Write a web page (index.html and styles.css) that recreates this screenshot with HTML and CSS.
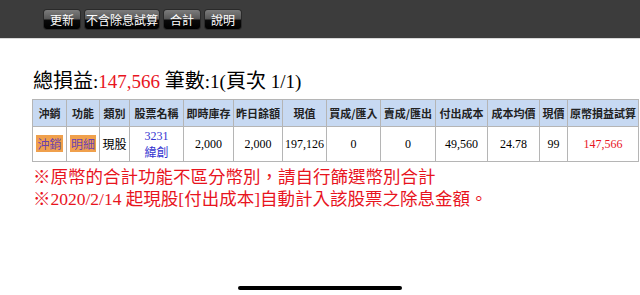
FILE: index.html
```html
<!DOCTYPE html>
<html lang="zh-Hant">
<head>
  <meta charset="UTF-8">
  <meta name="viewport" content="width=device-width, initial-scale=1.0">
  <title>庫存損益</title>
  <link rel="stylesheet" href="styles.css">
</head>
<body>

<div class="topbar">
  <button class="btn">更新</button>
  <button class="btn btn-wide">不含除息試算</button>
  <button class="btn">合計</button>
  <button class="btn">說明</button>
</div>

<div class="content">
  <div class="summary">
    <span class="big">總損益</span>:<span class="red">147,566</span> <span class="big">筆數</span>:1(<span class="big">頁次</span> 1/1)
  </div>

  <table class="grid">
    <colgroup>
      <col class="c1"><col class="c2"><col class="c3"><col class="c4"><col class="c5">
      <col class="c6"><col class="c7"><col class="c8"><col class="c9"><col class="c10">
      <col class="c11"><col class="c12"><col class="c13">
    </colgroup>
    <tr>
      <th>沖銷</th><th>功能</th><th>類別</th><th>股票名稱</th><th>即時庫存</th>
      <th>昨日餘額</th><th>現值</th><th>買成/匯入</th><th>賣成/匯出</th><th>付出成本</th>
      <th>成本均價</th><th>現價</th><th>原幣損益試算</th>
    </tr>
    <tr>
      <td><span class="tag">沖銷</span></td>
      <td><span class="tag">明細</span></td>
      <td class="cjk">現股</td>
      <td class="stock">3231<br><span class="cjk">緯創</span></td>
      <td>2,000</td>
      <td>2,000</td>
      <td>197,126</td>
      <td>0</td>
      <td>0</td>
      <td>49,560</td>
      <td>24.78</td>
      <td>99</td>
      <td class="red">147,566</td>
    </tr>
  </table>

  <div class="notes">
    <div>※原幣的合計功能不區分幣別，請自行篩選幣別合計</div>
    <div>※2020/2/14 起現股[付出成本]自動計入該股票之除息金額。</div>
  </div>
</div>

<div class="home-bar"></div>

</body>
</html>
```

FILE: styles.css
```css
body {
    margin: 0;
    background: #fff;
    font-family: "Liberation Serif", "Noto Sans CJK TC", serif;
    color: #000;
}

.topbar {
    height: 39px;
    background-color: #3c3c3c;
    border-bottom: 1px solid #d8d8d8;
    display: flex;
    align-items: center;
    gap: 5px;
    padding-left: 44px;
    box-sizing: border-box;
}

.btn {
    height: 19px;
    padding: 0 6px;
    border: none;
    border-radius: 3px;
    background: linear-gradient(#7c7c7c 0%, #565656 48%, #0a0a0a 52%, #000 100%);
    color: #fff;
    font-family: "Noto Sans CJK TC", sans-serif;
    font-size: 12px;
    line-height: 19px;
    box-shadow: 0 0 0 1px #2a2a2a;
}

.btn-wide {
    padding: 0 1px;
}

.content {
    padding: 29px 0 0 32px;
}

.summary {
    font-size: 19px;
    line-height: 26px;
    padding-left: 1px;
    margin-bottom: 4px;
}

.big {
    font-size: 20px;
}

.red {
    color: #e8141e;
}

.grid {
    border-collapse: collapse;
    table-layout: fixed;
    width: 606px;
}

.grid th, .grid td {
    border: 1px solid #b5b5b5;
    text-align: center;
    padding: 0;
}

.grid th {
    background-color: #c7d9f2;
    height: 26px;
    font-family: "Noto Sans CJK TC", sans-serif;
    font-size: 11px;
    font-weight: bold;
    color: #222;
    white-space: nowrap;
}

.grid td {
    height: 34px;
    font-size: 12px;
    line-height: 16px;
}

.cjk {
    font-family: "Noto Sans CJK TC", sans-serif;
}

.stock {
    color: #3434d0;
}

.tag {
    display: inline-block;
    background-color: #f0a04c;
    color: #6a3fb0;
    font-family: "Noto Sans CJK TC", sans-serif;
    font-size: 12px;
    line-height: 17px;
    padding: 0 1px;
}

.c1 { width: 34px; }
.c2 { width: 33px; }
.c3 { width: 30px; }
.c4 { width: 54px; }
.c5 { width: 50px; }
.c6 { width: 49px; }
.c7 { width: 44px; }
.c8 { width: 54px; }
.c9 { width: 55px; }
.c10 { width: 52px; }
.c11 { width: 52px; }
.c12 { width: 28px; }
.c13 { width: 71px; }

.notes {
    color: #e8141e;
    font-size: 17.5px;
    line-height: 22px;
    margin-top: 4px;
    padding-left: 1px;
}

.home-bar {
    position: absolute;
    left: 238px;
    top: 286px;
    width: 164px;
    height: 4px;
    border-radius: 2px;
    background: #000;
}
```
